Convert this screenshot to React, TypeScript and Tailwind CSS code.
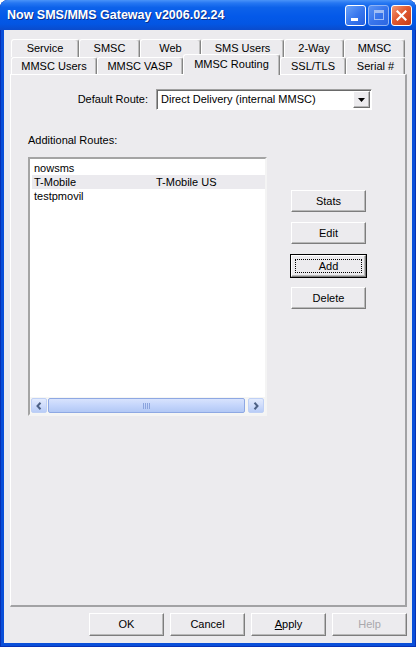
import React from "react";

type TabProps = {
  label: string;
  width: string;
  selected?: boolean;
};

function Tab({ label, width, selected = false }: TabProps) {
  if (selected) {
    return (
      <div
        className={`${width} relative z-10 -mb-[1px] flex h-[21px] items-center justify-center rounded-t-[3px] border-l border-t border-r border-l-white border-t-white border-r-[#858585] bg-[#ecebee] pb-[2px] shadow-[inset_-1px_0_0_#bdbdbd]`}
      >
        {label}
      </div>
    );
  }

  return (
    <div
      className={`${width} flex h-full items-center justify-center rounded-t-[3px] border-l border-t border-r border-l-white border-t-white border-r-[#858585] bg-[#ecebee] shadow-[inset_-1px_0_0_#bdbdbd]`}
    >
      {label}
    </div>
  );
}

type ButtonProps = {
  children: React.ReactNode;
  isDefault?: boolean;
  disabled?: boolean;
};

function ClassicButton({ children, isDefault = false, disabled = false }: ButtonProps) {
  return (
    <div
      className={`relative flex h-full w-full items-center justify-center border-l border-t border-r border-b border-l-white border-t-white border-r-[#7d7d7d] border-b-[#7d7d7d] bg-[#ecebee] shadow-[inset_-1px_-1px_0_#b9b9b9] ${
        isDefault ? "outline outline-1 outline-black" : ""
      } ${disabled ? "text-[#a9a8ac]" : "text-black"}`}
    >
      {isDefault ? (
        <span className="absolute inset-[3px] border border-dotted border-black" />
      ) : null}
      {children}
    </div>
  );
}

function TitleButton({ kind }: { kind: "min" | "max" | "close" }) {
  if (kind === "close") {
    return (
      <div className="flex h-[21px] w-[21px] items-center justify-center rounded-[3px] border border-white bg-[linear-gradient(135deg,#f29a78_0%,#e15a32_45%,#c53c18_100%)]">
        <svg width="11" height="11" viewBox="0 0 11 11">
          <path d="M1.5 1.5 L9.5 9.5 M9.5 1.5 L1.5 9.5" stroke="white" strokeWidth="2.2" strokeLinecap="square" />
        </svg>
      </div>
    );
  }

  if (kind === "max") {
    return (
      <div className="flex h-[21px] w-[21px] items-center justify-center rounded-[3px] border border-[#8fb3f5] bg-[linear-gradient(135deg,#5a93f4_0%,#3875ec_50%,#2c66e2_100%)]">
        <div className="h-[10px] w-[10px] border border-t-[3px] border-[#9fbdf5]" />
      </div>
    );
  }

  return (
    <div className="flex h-[21px] w-[21px] items-end justify-start rounded-[3px] border border-white bg-[linear-gradient(135deg,#6aa2f8_0%,#3a79ee_50%,#245fe0_100%)] pb-[4px] pl-[5px]">
      <div className="h-[3px] w-[7px] bg-white" />
    </div>
  );
}

function ScrollArrow({ dir }: { dir: "left" | "right" }) {
  return (
    <div className="flex h-[15px] w-[16px] items-center justify-center rounded-[2px] border border-[#bfd0f5] bg-[linear-gradient(180deg,#e3ebfd_0%,#cfdcfb_50%,#b9cdf7_100%)]">
      <svg width="6" height="8" viewBox="0 0 6 8">
        <path
          d={dir === "left" ? "M4.5 0.8 L1.5 4 L4.5 7.2" : "M1.5 0.8 L4.5 4 L1.5 7.2"}
          stroke="#4d6185"
          strokeWidth="2"
          fill="none"
        />
      </svg>
    </div>
  );
}

const routes = [
  { name: "nowsms", detail: "" },
  { name: "T-Mobile", detail: "T-Mobile US", selected: true },
  { name: "testpmovil", detail: "" },
];

export default function App() {
  return (
    <div className="h-[647px] w-[416px] bg-white font-['Liberation_Sans',Arial,sans-serif] text-[11px] text-black">
      <div className="flex h-full w-full flex-col rounded-t-[8px] bg-[#0a4fd9] shadow-[inset_1px_0_0_#0831b5,inset_-1px_0_0_#0831b5,inset_0_-1px_0_#0831b5]">
        {/* title bar */}
        <div className="flex h-[30px] items-center rounded-t-[8px] bg-[linear-gradient(180deg,#4a93f8_0%,#2677f2_10%,#0d62ea_25%,#0459e9_55%,#0356e3_80%,#0a4bcc_100%)] pl-[7px] pr-[4px]">
          <span className="text-[12.5px] font-bold text-white [text-shadow:1px_1px_0_#0a2f8a]">
            Now SMS/MMS Gateway v2006.02.24
          </span>
          <div className="ml-auto flex items-center gap-[2px]">
            <TitleButton kind="min" />
            <TitleButton kind="max" />
            <TitleButton kind="close" />
          </div>
        </div>

        {/* dialog body */}
        <div className="mx-[4px] mb-[4px] flex flex-1 flex-col bg-[#ecebee] pl-[6px] pr-[5px] pt-[9px]">
          {/* tab strip */}
          <div className="flex h-[18px] pl-[1px] pr-[2px]">
            <Tab label="Service" width="w-[68px]" />
            <Tab label="SMSC" width="w-[61px]" />
            <Tab label="Web" width="w-[61px]" />
            <Tab label="SMS Users" width="w-[83px]" />
            <Tab label="2-Way" width="w-[60px]" />
            <Tab label="MMSC" width="w-[61px]" />
          </div>
          <div className="flex h-[17px] items-end pl-[1px] pr-[2px]">
            <Tab label="MMSC Users" width="w-[86px]" />
            <Tab label="MMSC VASP" width="w-[86px]" />
            <Tab label="MMSC Routing" width="w-[97px]" selected />
            <Tab label="SSL/TLS" width="w-[66px]" />
            <Tab label="Serial #" width="w-[59px]" />
          </div>

          {/* tab page */}
          <div className="flex h-[533px] flex-col border-l border-t border-r-2 border-b-2 border-l-white border-t-white border-r-[#a2a2a4] border-b-[#a2a2a4]">
            <div className="mt-[14px] flex h-[21px] items-center">
              <span className="w-[137px] text-right">Default Route:</span>
              <div className="ml-[8px] flex h-[21px] w-[216px] items-center border border-t-[#a0a0a0] border-l-[#a0a0a0] border-r-white border-b-white bg-white shadow-[inset_1px_1px_0_#696969]">
                <span className="pl-[4px]">Direct Delivery (internal MMSC)</span>
                <div className="ml-auto mr-[1px] flex h-[17px] w-[17px] items-center justify-center border border-l-white border-t-white border-r-[#6f6f6f] border-b-[#6f6f6f] bg-[#ecebee] shadow-[inset_-1px_-1px_0_#b5b5b5]">
                  <svg width="7" height="4" viewBox="0 0 7 4">
                    <path d="M0 0 H7 L3.5 4 Z" fill="black" />
                  </svg>
                </div>
              </div>
            </div>

            <div className="mt-[24px] pl-[17px] leading-[13px]">Additional Routes:</div>

            <div className="mt-[10px] flex pl-[17px]">
              <div className="flex h-[259px] w-[239px] flex-col border-2 border-t-[#a4a4a4] border-l-[#a4a4a4] border-r-[#f4f4f4] border-b-[#f4f4f4] bg-white">
                <div className="flex-1 pt-[2px]">
                  {routes.map((route) => (
                    <div
                      key={route.name}
                      className={`ml-[2px] flex h-[14px] items-center ${
                        route.selected ? "bg-[#ebeaee]" : ""
                      }`}
                    >
                      <span className="w-[124px] pl-[2px]">{route.name}</span>
                      <span>{route.detail}</span>
                    </div>
                  ))}
                </div>
                <div className="flex h-[17px] items-center bg-[#f6f6f4] px-[1px]">
                  <ScrollArrow dir="left" />
                  <div className="ml-[1px] mr-[3px] flex h-[15px] flex-1 items-center justify-center gap-[1px] rounded-[2px] border border-[#8ea8e3] bg-[linear-gradient(180deg,#d8e3fd_0%,#c4d5fb_50%,#b2c8f5_100%)]">
                    <span className="h-[6px] w-[1px] bg-[#8ba4dd]" />
                    <span className="h-[6px] w-[1px] bg-[#8ba4dd]" />
                    <span className="h-[6px] w-[1px] bg-[#8ba4dd]" />
                    <span className="h-[6px] w-[1px] bg-[#8ba4dd]" />
                  </div>
                  <ScrollArrow dir="right" />
                </div>
              </div>

              <div className="ml-[24px] flex flex-col pt-[33px]">
                <div className="h-[22px] w-[75px]">
                  <ClassicButton>Stats</ClassicButton>
                </div>
                <div className="mt-[10px] h-[22px] w-[75px]">
                  <ClassicButton>Edit</ClassicButton>
                </div>
                <div className="mt-[11px] h-[22px] w-[75px]">
                  <ClassicButton isDefault>Add</ClassicButton>
                </div>
                <div className="mt-[10px] h-[22px] w-[75px]">
                  <ClassicButton>Delete</ClassicButton>
                </div>
              </div>
            </div>
          </div>

          {/* dialog buttons */}
          <div className="mt-[6px] flex justify-end gap-[6px]">
            <div className="h-[23px] w-[75px]">
              <ClassicButton>OK</ClassicButton>
            </div>
            <div className="h-[23px] w-[75px]">
              <ClassicButton>Cancel</ClassicButton>
            </div>
            <div className="h-[23px] w-[75px]">
              <ClassicButton>
                <span>
                  <span className="underline">A</span>pply
                </span>
              </ClassicButton>
            </div>
            <div className="h-[23px] w-[75px]">
              <ClassicButton disabled>Help</ClassicButton>
            </div>
          </div>
        </div>
      </div>
    </div>
  );
}
